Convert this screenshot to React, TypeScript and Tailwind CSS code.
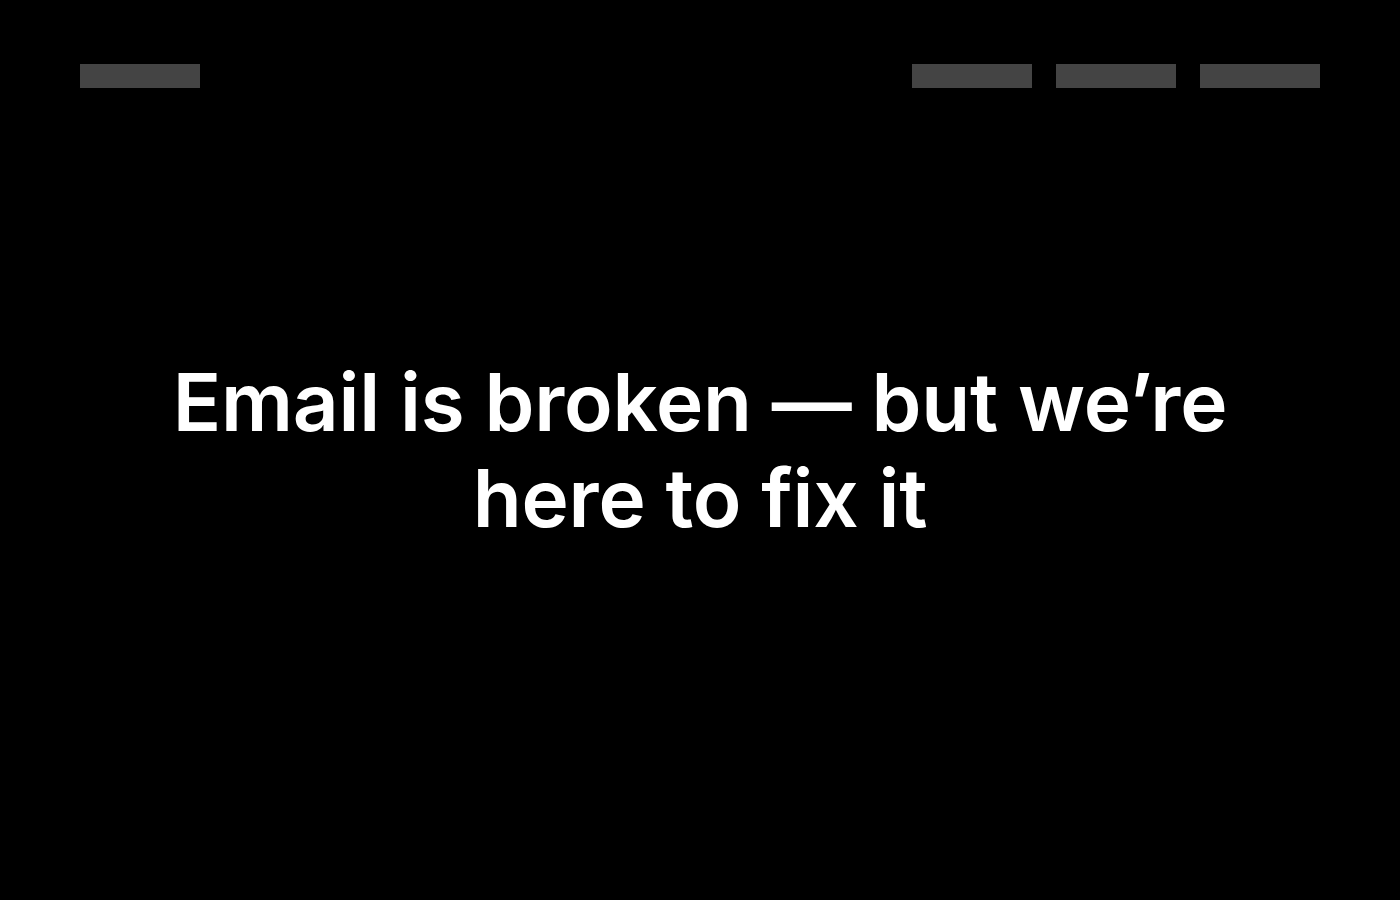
export default function App() {
  const navBars = ["a", "b", "c"];

  return (
    <div className="flex h-screen w-full flex-col bg-black font-['Inter',sans-serif] text-white">
      {/* top bar: logo placeholder + nav placeholders */}
      <header className="flex h-[88px] shrink-0 items-start justify-between px-20 pt-16">
        <div className="h-6 w-[120px] bg-[#444444]" />
        <nav className="flex gap-6">
          {navBars.map((k) => (
            <div key={k} className="h-6 w-[120px] bg-[#444444]" />
          ))}
        </nav>
      </header>

      <main className="flex flex-1 items-center justify-center px-20">
        <h1 className="max-w-[1100px] text-center text-[80px] font-semibold leading-[96px] tracking-[-0.2px]">
          Email is broken — but we’re here to fix it
        </h1>
      </main>

      <div className="h-[88px] shrink-0" />
    </div>
  );
}
